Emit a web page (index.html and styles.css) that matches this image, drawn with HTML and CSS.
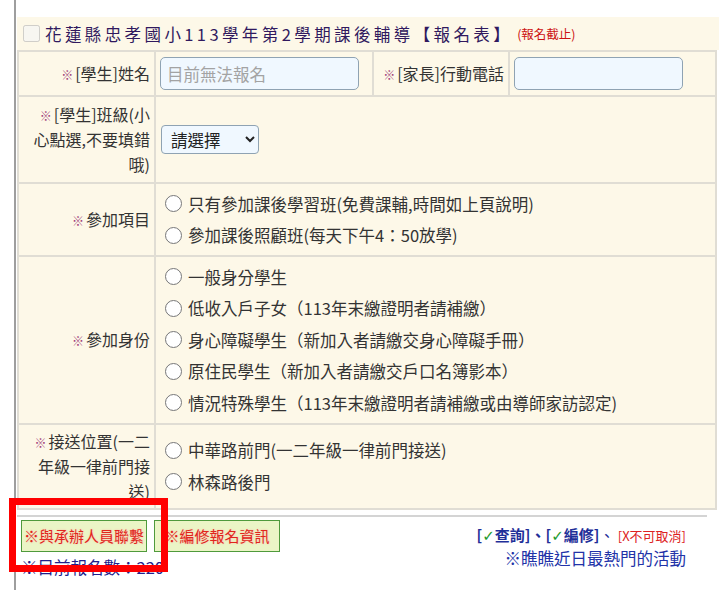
FILE: index.html
```html
<!DOCTYPE html>
<html lang="zh-Hant">
<head>
    <meta charset="UTF-8">
    <meta name="viewport" content="width=device-width, initial-scale=1.0">
    <title>課後輔導報名表</title>
    <link rel="stylesheet" href="styles.css">
</head>
<body>

    <div class="page">
        <div class="title-bar">
            <input type="checkbox" class="title-check" disabled>
            <span class="title">花蓮縣忠孝國小113學年第2學期課後輔導【報名表】</span>
            <span class="closed">(報名截止)</span>
        </div>

        <table class="signup">
            <colgroup>
                <col class="col-label">
                <col class="col-name">
                <col class="col-label2">
                <col>
            </colgroup>
            <tr class="row-name">
                <th><span class="mark">※</span>[學生]姓名</th>
                <td><input type="text" class="text-input name-input" placeholder="目前無法報名"></td>
                <th><span class="mark">※</span>[家長]行動電話</th>
                <td><input type="text" class="text-input phone-input"></td>
            </tr>
            <tr class="row-class">
                <th><span class="mark">※</span>[學生]班級(小心點選,不要填錯哦)</th>
                <td colspan="3">
                    <select class="class-select">
                        <option>請選擇</option>
                    </select>
                </td>
            </tr>
            <tr>
                <th><span class="mark">※</span>參加項目</th>
                <td colspan="3">
                    <label class="option"><input type="radio" name="item">只有參加課後學習班(免費課輔,時間如上頁說明)</label>
                    <label class="option"><input type="radio" name="item">參加課後照顧班(每天下午4：50放學)</label>
                </td>
            </tr>
            <tr>
                <th><span class="mark">※</span>參加身份</th>
                <td colspan="3">
                    <label class="option"><input type="radio" name="status">一般身分學生</label>
                    <label class="option"><input type="radio" name="status">低收入戶子女（113年末繳證明者請補繳）</label>
                    <label class="option"><input type="radio" name="status">身心障礙學生（新加入者請繳交身心障礙手冊）</label>
                    <label class="option"><input type="radio" name="status">原住民學生（新加入者請繳交戶口名簿影本）</label>
                    <label class="option"><input type="radio" name="status">情況特殊學生（113年末繳證明者請補繳或由導師家訪認定)</label>
                </td>
            </tr>
            <tr class="row-pickup">
                <th><span class="mark">※</span>接送位置(一二年級一律前門接送)</th>
                <td colspan="3">
                    <label class="option"><input type="radio" name="gate">中華路前門(一二年級一律前門接送)</label>
                    <label class="option"><input type="radio" name="gate">林森路後門</label>
                </td>
            </tr>
        </table>

        <div class="footer">
            <div class="actions">
                <div class="buttons">
                    <span class="btn">※與承辦人員聯繫</span>
                    <span class="btn">※編修報名資訊</span>
                </div>
                <p class="count">※目前報名數：220</p>
            </div>
            <div class="links">
                <p class="rules"><b>[<span class="ok">✓</span>查詢]、[<span class="ok">✓</span>編修]</b>、 <span class="no">[X不可取消]</span></p>
                <p class="hot">※瞧瞧近日最熱門的活動</p>
            </div>
        </div>

        <!-- annotation box drawn over the contact button -->
        <div class="highlight"></div>
    </div>

</body>
</html>
```

FILE: styles.css
```css
body {
    font-family: "Noto Sans CJK TC", "Noto Sans", sans-serif;
    font-size: 16.5px;
    margin: 0;
    padding: 0;
    color: #333;
    background-color: #fff;
}

.page {
    position: relative;
    margin-left: 14px;
    border-left: 2px solid #9e9e9e;
    padding: 17px 0 0 1px;
    min-height: 573px;
}

.title-bar {
    display: flex;
    align-items: center;
    height: 33px;
    padding-left: 6px;
    background-color: #fdf8e8;
}

.title-check {
    width: 17px;
    height: 17px;
    margin: 0 5px 0 0;
}

.title {
    letter-spacing: 3.4px;
    color: #30195e;
    line-height: 20px;
}

.closed {
    margin-left: 4px;
    font-size: 12.5px;
    color: #cc1111;
}

.signup {
    width: 700px;
    table-layout: fixed;
    border-collapse: collapse;
    background-color: #fdf8e8;
}

.col-label {
    width: 137px;
}

.col-name {
    width: 218px;
}

.col-label2 {
    width: 136px;
}

.signup th,
.signup td {
    border: 2px solid #e0ddd4;
    padding: 4px 5px;
    vertical-align: middle;
}

.signup th {
    font-weight: normal;
    font-size: 16px;
    text-align: right;
    line-height: 25px;
    padding-right: 4px;
}

.mark {
    font-size: 12px;
    line-height: 1;
    color: #a0407a;
    margin-right: 2px;
}

.row-name td {
    padding: 5px 4px;
}

.text-input {
    box-sizing: border-box;
    height: 33px;
    padding: 0 6px;
    border: 1px solid #8fa3b3;
    border-radius: 5px;
    background-color: #f0f8ff;
    font-family: inherit;
    font-size: 16.5px;
    display: block;
}

.text-input::placeholder {
    color: #a3a3a3;
}

.name-input {
    width: 199px;
}

.phone-input {
    width: 169px;
}

.row-class th {
    padding-top: 5px;
    padding-bottom: 5px;
}

.class-select {
    width: 98px;
    height: 29px;
    padding-left: 5px;
    border: 1px solid #8fa3b3;
    border-radius: 4px;
    background-color: #f0f8ff;
    font-family: inherit;
    font-size: 16.5px;
    color: #222;
}

.option {
    display: flex;
    align-items: center;
    height: 31.5px;
    white-space: nowrap;
}

.option input {
    width: 17px;
    height: 17px;
    margin: 0 6px 0 4px;
}

.footer {
    display: flex;
    justify-content: space-between;
    width: 690px;
    margin-top: 5px;
    border-top: 2px solid #d4d4d4;
    padding-top: 3px;
}

.actions {
    padding-left: 4px;
}

.buttons {
    display: flex;
    gap: 7px;
}

.btn {
    box-sizing: border-box;
    display: flex;
    align-items: center;
    justify-content: center;
    width: 126px;
    height: 32px;
    border: 1px solid #4f9a3c;
    background-color: #ebf5c6;
    color: #e0261c;
    font-size: 15px;
    text-shadow: 0 0 2px #ffb3a8;
}

.count {
    margin: 4px 0 0;
    color: #22208a;
    line-height: 22px;
}

.links {
    text-align: right;
    padding-right: 21px;
    padding-top: 4px;
}

.links p {
    margin: 0;
}

.rules {
    font-size: 15px;
    line-height: 22px;
    color: #1f2f99;
}

.ok {
    color: #1b9a2a;
    font-family: "DejaVu Sans", sans-serif;
    font-weight: bold;
}

.no {
    font-size: 13px;
    color: #dd2222;
}

.hot {
    color: #2233a8;
    line-height: 22px;
    margin-top: 0;
}

.highlight {
    position: absolute;
    left: -7px;
    top: 498px;
    box-sizing: border-box;
    width: 159px;
    height: 74px;
    border: 7px solid #ff0000;
}
```
